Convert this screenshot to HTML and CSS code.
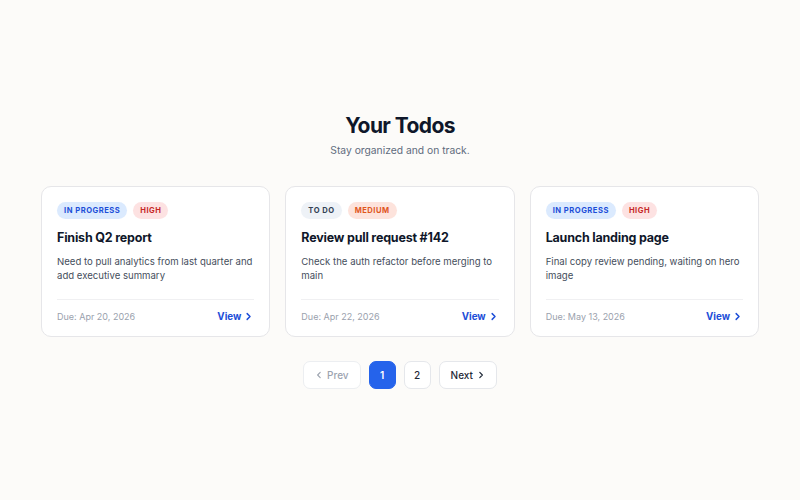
FILE: index.html
```html
<!DOCTYPE html>
<html lang="en">
<head>
<meta charset="utf-8">
<title>Your Todos</title>
<link rel="stylesheet" href="styles.css">
</head>
<body>
<main class="page">
  <header class="head">
    <h1 class="title">Your Todos</h1>
    <p class="subtitle">Stay organized and on track.</p>
  </header>
  <section class="grid">
    <article class="card">
      <div class="badges">
        <span class="badge badge-progress">In Progress</span>
        <span class="badge badge-high">High</span>
      </div>
      <h2 class="card-title">Finish Q2 report</h2>
      <p class="card-desc">Need to pull analytics from last quarter and add executive summary</p>
      <div class="card-foot">
        <span class="due">Due: Apr 20, 2026</span>
        <a class="view" href="#">View <svg class="chev" viewBox="0 0 10 10" width="9" height="9"><path d="M3.5 1.8 L6.7 5 L3.5 8.2" fill="none" stroke="currentColor" stroke-width="1.6" stroke-linecap="round" stroke-linejoin="round"/></svg></a>
      </div>
    </article>
    <article class="card">
      <div class="badges">
        <span class="badge badge-todo">To Do</span>
        <span class="badge badge-medium">Medium</span>
      </div>
      <h2 class="card-title">Review pull request #142</h2>
      <p class="card-desc">Check the auth refactor before merging to main</p>
      <div class="card-foot">
        <span class="due">Due: Apr 22, 2026</span>
        <a class="view" href="#">View <svg class="chev" viewBox="0 0 10 10" width="9" height="9"><path d="M3.5 1.8 L6.7 5 L3.5 8.2" fill="none" stroke="currentColor" stroke-width="1.6" stroke-linecap="round" stroke-linejoin="round"/></svg></a>
      </div>
    </article>
    <article class="card">
      <div class="badges">
        <span class="badge badge-progress">In Progress</span>
        <span class="badge badge-high">High</span>
      </div>
      <h2 class="card-title">Launch landing page</h2>
      <p class="card-desc">Final copy review pending, waiting on hero image</p>
      <div class="card-foot">
        <span class="due">Due: May 13, 2026</span>
        <a class="view" href="#">View <svg class="chev" viewBox="0 0 10 10" width="9" height="9"><path d="M3.5 1.8 L6.7 5 L3.5 8.2" fill="none" stroke="currentColor" stroke-width="1.6" stroke-linecap="round" stroke-linejoin="round"/></svg></a>
      </div>
    </article>
  </section>
  <nav class="pager">
    <button class="pbtn pbtn-disabled"><svg class="chev" viewBox="0 0 10 10" width="8" height="8"><path d="M6.5 1.8 L3.3 5 L6.5 8.2" fill="none" stroke="currentColor" stroke-width="1.4" stroke-linecap="round" stroke-linejoin="round"/></svg> Prev</button>
    <button class="pbtn pnum pactive">1</button>
    <button class="pbtn pnum">2</button>
    <button class="pbtn">Next <svg class="chev" viewBox="0 0 10 10" width="8" height="8"><path d="M3.5 1.8 L6.7 5 L3.5 8.2" fill="none" stroke="currentColor" stroke-width="1.5" stroke-linecap="round" stroke-linejoin="round"/></svg></button>
  </nav>
</main>
</body>
</html>
```

FILE: styles.css
```css
* { box-sizing: border-box; }
html, body { margin: 0; padding: 0; }
body {
  background: #fcfbf9;
  font-family: Inter, "Noto Sans", sans-serif;
  color: #111827;
  width: 800px;
  height: 500px;
}
.page {
  width: 718px;
  margin: 0 auto;
  padding-top: 112px;
  display: flex;
  flex-direction: column;
  align-items: stretch;
}
.head { text-align: center; }
.title {
  margin: 0;
  font-size: 21px;
  line-height: 28px;
  font-weight: 700;
  letter-spacing: -0.6px;
  color: #0f172a;
}
.subtitle {
  margin: 2px 0 0;
  font-size: 10.3px;
  line-height: 16px;
  color: #5f6b7d;
}
.grid {
  margin-top: 28px;
  display: grid;
  grid-template-columns: repeat(3, 1fr);
  gap: 15px;
}
.card {
  background: #ffffff;
  border: 1px solid #e6e6e9;
  border-radius: 10px;
  padding: 15px 15px 10px;
  height: 151px;
  display: flex;
  flex-direction: column;
}
.badges { display: flex; gap: 6px; }
.badge {
  display: inline-block;
  height: 17px;
  line-height: 17px;
  padding: 0 7px;
  border-radius: 9px;
  font-size: 7.6px;
  font-weight: 700;
  letter-spacing: 0.5px;
  text-transform: uppercase;
}
.badge-progress { background: #dbeafe; color: #1d4ed8; }
.badge-high { background: #fde2e2; color: #c62828; }
.badge-todo { background: #eef2f7; color: #334155; }
.badge-medium { background: #fde3dc; color: #e0561d; }
.card-title {
  margin: 10px 0 0;
  font-size: 12.5px;
  line-height: 18px;
  font-weight: 700;
  letter-spacing: -0.2px;
  color: #0f172a;
}
.card-desc {
  margin: 8px 0 0;
  font-size: 9.6px;
  line-height: 14px;
  color: #454e5c;
}
.card-foot {
  margin-top: auto;
  border-top: 1px solid #f0f0f2;
  padding-top: 7px;
  display: flex;
  justify-content: space-between;
  align-items: center;
  height: 27px;
}
.due { font-size: 9px; color: #9aa1ad; }
.view {
  font-size: 9.8px;
  font-weight: 700;
  color: #1d4ed8;
  text-decoration: none;
  display: inline-flex;
  align-items: center;
  gap: 3px;
  padding-right: 1px;
}
.chev { display: block; }
.pager {
  margin-top: 24px;
  display: flex;
  justify-content: center;
  gap: 8px;
}
.pbtn {
  height: 28px;
  padding: 0 11px;
  background: #ffffff;
  border: 1px solid #e5e7eb;
  border-radius: 7px;
  font-family: Inter, "Noto Sans", sans-serif;
  font-size: 10px;
  font-weight: 500;
  color: #1f2937;
  display: inline-flex;
  align-items: center;
  gap: 4px;
}
.pbtn-disabled { color: #9ca3af; border-color: #eceef1; }
.pnum { width: 27px; padding: 0; justify-content: center; }
.pactive { background: #2563eb; border-color: #2563eb; color: #ffffff; font-weight: 600; }
```
